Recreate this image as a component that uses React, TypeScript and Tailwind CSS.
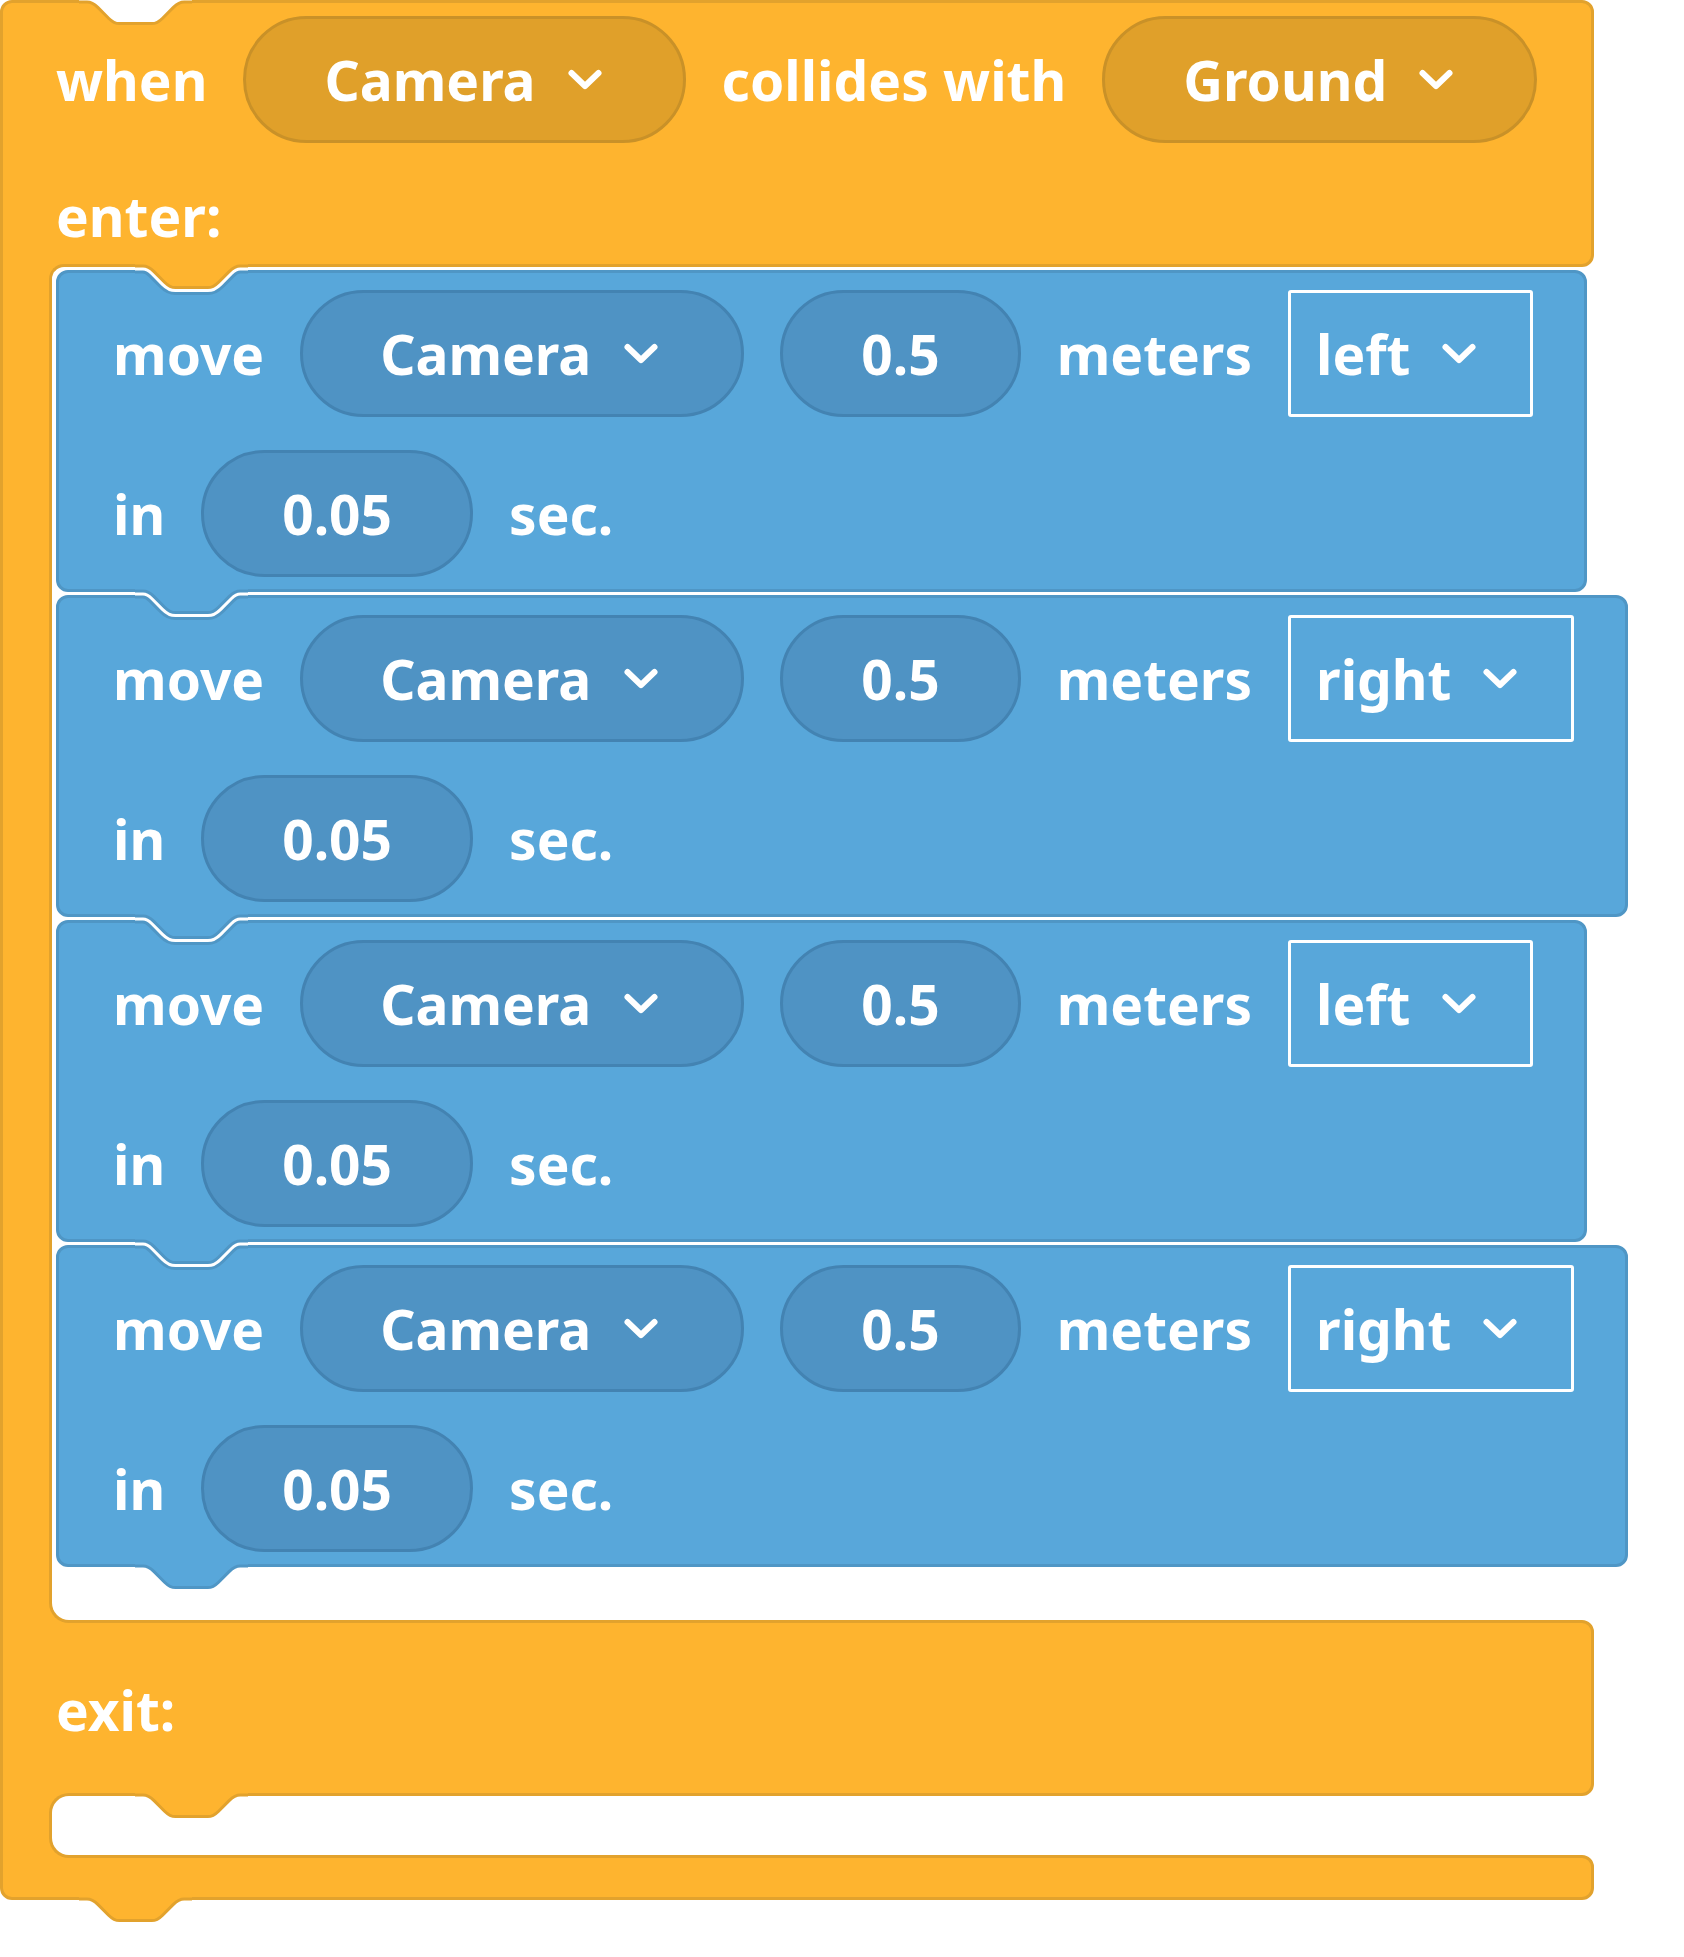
import React from 'react';

// Scratch-style notch outline, scaled to the block size (width 97.2, depth 21.6)
const NOTCH =
  'c 5.4 0 8.1 2.7 10.8 5.4 l 10.8 10.8 c 2.7 2.7 5.4 5.4 10.8 5.4 h 32.4 c 5.4 0 8.1 -2.7 10.8 -5.4 l 10.8 -10.8 c 2.7 -2.7 5.4 -5.4 10.8 -5.4';
const CURVE = `M -8 0 h 8 ${NOTCH} h 8`;
const AREA = `${CURVE} V -10 H -8 Z`;

function Tab({ fill, stroke, gap, outer, className }: { fill: string; stroke: string; gap?: boolean; outer?: string; className: string }) {
  return (
    <svg className={`pointer-events-none absolute z-20 ${className}`} width={113.2} height={46} viewBox="-8 -10 113.2 46">
      {outer && <path d={CURVE} fill="none" stroke={outer} strokeWidth={15} />}
      {gap && <path d={CURVE} fill="none" stroke="#ffffff" strokeWidth={9} />}
      <path d={AREA} fill={fill} />
      <path d={CURVE} fill="none" stroke={stroke} strokeWidth={3} />
    </svg>
  );
}

function Chevron() {
  return (
    <svg width={36} height={24} viewBox="0 0 36 24" className="shrink-0">
      <polyline points="4.5,5 18,18 31.5,5" fill="none" stroke="#ffffff" strokeWidth={6} strokeLinecap="round" strokeLinejoin="round" />
    </svg>
  );
}

function Label({ children }: { children: React.ReactNode }) {
  return <span className="whitespace-pre text-[55px] leading-[55px] font-bold text-white">{children}</span>;
}

function OrangePill({ label }: { label: string }) {
  return (
    <div className="flex h-[127px] items-center gap-[31px] rounded-full border-[3px] border-[#C99128] bg-[#E0A02A] pl-[78px] pr-[80px]">
      <Label>{label}</Label>
      <Chevron />
    </div>
  );
}

function BluePill({ label, chevron }: { label: string; chevron?: boolean }) {
  return (
    <div
      className={`flex h-[127px] items-center gap-[32px] rounded-full border-[3px] border-[#4383B2] bg-[#4F93C4] ${
        chevron ? 'pl-[77px] pr-[82px]' : 'px-[78px]'
      }`}
    >
      <Label>{label}</Label>
      {chevron && <Chevron />}
    </div>
  );
}

function Direction({ label }: { label: string }) {
  return (
    <div className="flex h-[127px] items-center gap-[31px] rounded-[3px] border-[3px] border-white pl-[25px] pr-[53px]">
      <Label>{label}</Label>
      <Chevron />
    </div>
  );
}

function MoveBlock({ dir, last }: { dir: string; last?: boolean }) {
  return (
    <div className="relative flex flex-col gap-[33px] rounded-[12px] border-[3px] border-[#4F96C5] bg-[#58A7DA] pt-[17px] pb-[12px] pl-[54px] pr-[51px]">
      <div className="flex h-[127px] items-center gap-[36px]">
        <Label>move</Label>
        <BluePill label="Camera" chevron />
        <BluePill label="0.5" />
        <Label>meters</Label>
        <Direction label={dir} />
      </div>
      <div className="flex h-[127px] items-center gap-[36px]">
        <Label>in</Label>
        <BluePill label="0.05" />
        <Label>sec.</Label>
      </div>
      {last ? (
        <Tab fill="#58A7DA" stroke="#4F96C5" className="top-[307.5px] left-[76px]" />
      ) : (
        <Tab fill="#58A7DA" stroke="#4F96C5" gap outer="#4F96C5" className="top-[307.5px] left-[76px]" />
      )}
    </div>
  );
}

export default function App() {
  return (
    <div className="min-h-[1957px] bg-white font-['Noto_Sans',sans-serif]">
      <div className="flex w-fit flex-col">
        {/* header */}
        <div className="relative w-[1594px] rounded-tl-[12px] rounded-tr-[12px] rounded-br-[12px] border-[3px] border-[#E2A22D] bg-[#FEB42F] pt-[13px] pb-[21px] pl-[53px] pr-[53px]">
          <Tab fill="#ffffff" stroke="#E2A22D" className="-top-[11.5px] left-[76px]" />
          <div className="flex h-[127px] items-center gap-[36px]">
            <Label>when</Label>
            <OrangePill label="Camera" />
            <Label>collides with</Label>
            <OrangePill label="Ground" />
          </div>
          <div className="mt-[45px] h-[55px]">
            <Label>enter:</Label>
          </div>
        </div>

        {/* enter mouth */}
        <div className="relative z-10 -mt-[3px] flex w-[1582px] border-l-[3px] border-[#E2A22D] bg-[#FEB42F] pl-[46px]">
          <div className="relative flex min-w-0 flex-1 flex-col items-start gap-[3px] rounded-tl-[15px] rounded-bl-[20px] border-y-[3px] border-l-[3px] border-[#E2A22D] bg-white pt-[3px] pb-[53px] pl-[4px]">
            <Tab fill="#FEB42F" stroke="#E2A22D" gap outer="#4F96C5" className="-top-[11.5px] left-[83px]" />
            <MoveBlock dir="left" />
            <MoveBlock dir="right" />
            <MoveBlock dir="left" />
            <MoveBlock dir="right" last />
          </div>
        </div>

        {/* exit */}
        <div className="-mt-[3px] w-[1594px] rounded-tr-[12px] rounded-br-[12px] border-[3px] border-[#E2A22D] bg-[#FEB42F] pt-[59px] pb-[56px] pl-[53px]">
          <div className="h-[55px]">
            <Label>exit:</Label>
          </div>
        </div>

        {/* exit mouth */}
        <div className="relative z-10 -mt-[3px] flex w-[1582px] border-l-[3px] border-[#E2A22D] bg-[#FEB42F] pl-[46px]">
          <div className="relative h-[65px] min-w-0 flex-1 rounded-l-[20px] border-y-[3px] border-l-[3px] border-[#E2A22D] bg-white">
            <Tab fill="#FEB42F" stroke="#E2A22D" className="-top-[11.5px] left-[83px]" />
          </div>
        </div>

        {/* bottom arm */}
        <div className="relative -mt-[3px] h-[45px] w-[1594px] rounded-tr-[12px] rounded-b-[12px] border-[3px] border-[#E2A22D] bg-[#FEB42F]">
          <Tab fill="#FEB42F" stroke="#E2A22D" className="top-[30.5px] left-[76px]" />
        </div>
      </div>
    </div>
  );
}
